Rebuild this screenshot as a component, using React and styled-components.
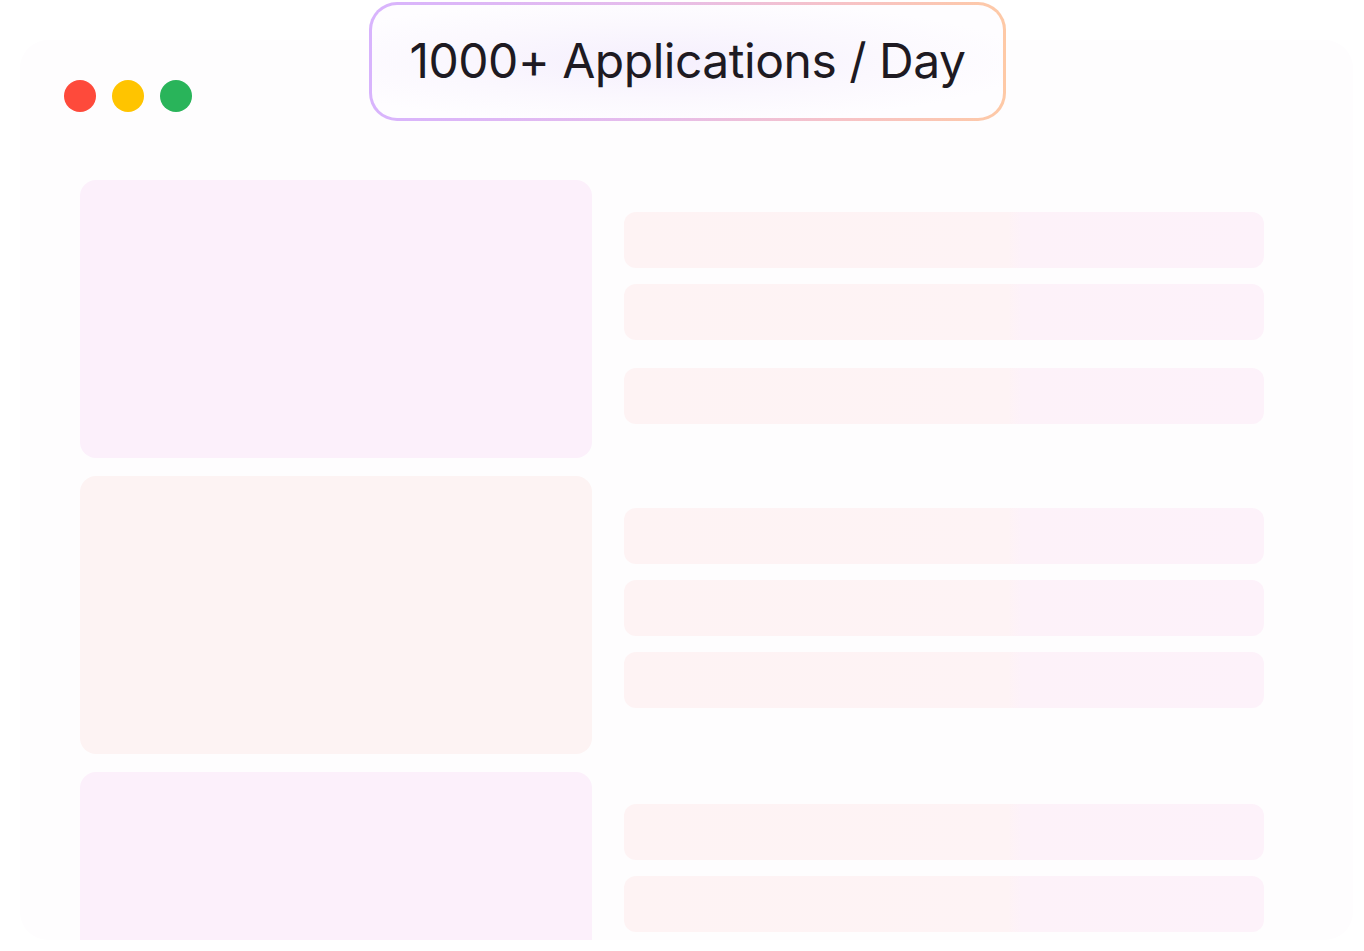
import React from 'react';
import styled, { createGlobalStyle } from 'styled-components';

const GlobalStyle = createGlobalStyle`
  html, body {
    margin: 0;
    padding: 0;
    background: #ffffff;
    overflow: hidden;
  }
  body {
    font-family: Inter, "Open Sans", sans-serif;
  }
`;

const Page = styled.div`
  position: relative;
  width: 1364px;
  height: 951px;
  padding: 40px 11px 0 20px;
  box-sizing: border-box;
`;

const Window = styled.div`
  height: 900px;
  background: #fefdfe;
  border-radius: 28px;
  padding: 40px 0 0 44px;
  box-sizing: border-box;
  overflow: hidden;
`;

const Lights = styled.div`
  display: flex;
  gap: 16px;
`;

const Light = styled.span`
  width: 32px;
  height: 32px;
  border-radius: 50%;
  background: ${p => p.color};
`;

const Content = styled.div`
  display: grid;
  grid-template-columns: 512px 640px;
  column-gap: 32px;
  row-gap: 18px;
  margin: 68px 0 0 16px;
`;

const Card = styled.div`
  height: 278px;
  border-radius: 16px;
  background: ${p => (p.tone === 'peach' ? '#fdf3f3' : '#fcf0fb')};
`;

const Bars = styled.div`
  display: flex;
  flex-direction: column;
  gap: 16px;
  padding-top: 32px;
`;

const Bar = styled.div`
  height: 56px;
  border-radius: 12px;
  margin-top: ${p => p.extra || 0}px;
  background: linear-gradient(90deg, #fef3f4 0%, #fef3f5 60%, #fdf2f9 62%, #fdf2fa 100%);
`;

const Badge = styled.div`
  position: absolute;
  top: 2px;
  left: 369px;
  width: 637px;
  height: 119px;
  box-sizing: border-box;
  border: 3px solid transparent;
  border-radius: 28px;
  background:
    radial-gradient(ellipse 60% 55% at 45% 50%, #f5effd 0%, #fbf8fe 60%, #fefdff 100%) padding-box,
    linear-gradient(90deg, #d8b4fd 0%, #e6bdeb 45%, #f7c3c6 75%, #fec9a6 100%) border-box;
  display: flex;
  align-items: center;
  justify-content: center;
`;

const BadgeText = styled.span`
  font-family: Inter, "Open Sans", sans-serif;
  font-size: 48px;
  font-weight: 400;
  letter-spacing: -0.01em;
  color: #1e1a22;
  padding-bottom: 2px;
`;

const rows = [
  { tone: 'pink', bars: [0, 0, 12] },
  { tone: 'peach', bars: [0, 0, 0] },
  { tone: 'pink', bars: [0, 0] },
];

export default function App() {
  return (
    <>
      <GlobalStyle />
      <Page>
        <Window>
          <Lights>
            <Light color="#fe4a3b" />
            <Light color="#ffc400" />
            <Light color="#29b45a" />
          </Lights>
          <Content>
            {rows.map((row, i) => (
              <React.Fragment key={i}>
                <Card tone={row.tone} />
                <Bars>
                  {row.bars.map((extra, j) => (
                    <Bar key={j} extra={extra} />
                  ))}
                </Bars>
              </React.Fragment>
            ))}
          </Content>
        </Window>
        <Badge>
          <BadgeText>1000+ Applications / Day</BadgeText>
        </Badge>
      </Page>
    </>
  );
}
